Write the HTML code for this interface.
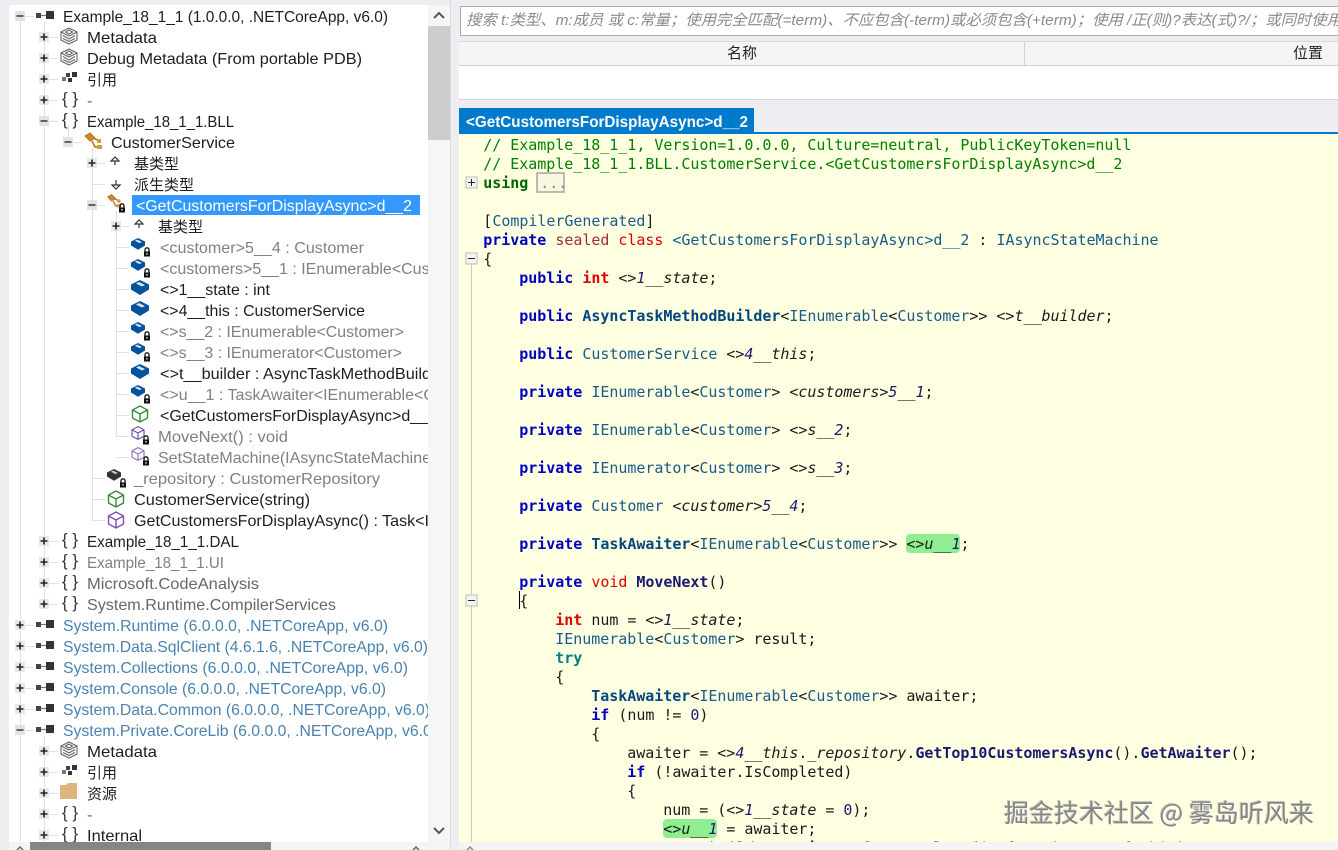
<!DOCTYPE html>
<html lang="zh"><head><meta charset="utf-8"><title>ILSpy</title>
<style>
html,body{margin:0;padding:0;width:1338px;height:850px;overflow:hidden;background:#eeeef2}
svg{position:absolute;left:0;top:0;display:block}
.tr text{font-family:"Liberation Sans","Noto Sans CJK SC",sans-serif;font-size:16px;fill:#1e1e1e}
.tr text.cj{font-size:15px}
.tr text.g{fill:#808080}
.tr text.d{fill:#666}
.tr text.b{fill:#4a82b0}
.tr text.br{font-family:"Liberation Sans",sans-serif;font-size:17px;fill:#333}
.c text{font-family:"DejaVu Sans Mono",monospace;font-size:15px;letter-spacing:-.03px;fill:#1a1a1a;white-space:pre}
.k{fill:#0000c0;font-weight:bold}
.sl{fill:#a03030}
.rd{fill:#e00000}
.ib{fill:#e00000;font-weight:bold}
.t{fill:#1a5a8a}
.tb{fill:#00467f;font-weight:bold}
.m{fill:#191970;font-weight:bold}
.i{font-style:italic}
.n{font-style:italic;fill:#191970}
.us{fill:#006400;font-weight:bold}
.tr2{fill:#008080;font-weight:bold}
.z{fill:#191970}
#wm{position:absolute;left:1004px;top:794px;font:25px/36px "Noto Sans CJK SC",sans-serif;color:#858585;white-space:pre;text-shadow:1px 1px 0 rgba(255,255,255,.9),-1px -1px 0 rgba(90,90,90,.35)}
</style></head><body>
<svg width="1338" height="850" viewBox="0 0 1338 850" xmlns="http://www.w3.org/2000/svg">
<defs>
<clipPath id="treeClip"><rect x="9" y="5" width="419" height="837"/></clipPath>
<clipPath id="edClip"><rect x="459" y="134" width="879" height="708"/></clipPath>
<g id="p"><rect x="-5" y="-5" width="10" height="10" fill="#e8e8e8"/><path d="M-3.5 0H3.5M0-3.5V3.5" stroke="#222" stroke-width="1.6"/></g>
<g id="q"><rect x="-5" y="-5" width="10" height="10" fill="#e2e2e2"/><path d="M-3.5 0H3.5" stroke="#444" stroke-width="1.6"/></g>
<g id="asm"><rect x="-4" y="-2" width="5" height="5" fill="#444"/><path d="M1 .5H6" stroke="#777" stroke-width="1.2"/><rect x="6" y="-4" width="8" height="8" fill="#333"/></g>
<g id="meta" fill="none" stroke="#666" stroke-width="1.1"><path d="M0-8L8-4V4L0 8-8 4V-4Z"/><path d="M-8-4L0 0 8-4"/><path d="M-6-.5L0 3 6-.5"/><path d="M-6 2.5L0 5.500 6 2.5"/><path d="M-3.500-4L0-2 3.500-4 0-6Z"/></g>
<g id="refs"><rect x="-7" y="-1" width="4" height="4" fill="#777"/><rect x="-3" y="-5" width="4" height="4" fill="#444"/><rect x="-1" y="0" width="4" height="4" fill="#333"/><rect x="3" y="-6" width="5" height="5" fill="#333"/></g>
<g id="cls" fill="none"><path d="M-8-5L-3-8 2-3-3 0Z" fill="#c98a2e" stroke="#b7701a"/><path d="M0-3L7 0M-1 0L2 6H8" stroke="#b7701a" stroke-width="1.6"/><rect x="4" y="-2" width="4" height="4" fill="#d69a3c"/><rect x="4" y="4" width="5" height="4" fill="#d69a3c"/></g>
<g id="lock"><path d="M-2 -.5V-2.2A2 2 0 0 1 2-2.2V-.5" fill="none" stroke="#111" stroke-width="1.3"/><rect x="-3" y="-.5" width="6" height="5" fill="#111"/><rect x="-.6" y="1" width="1.2" height="1.6" fill="#fff"/></g>
<g id="fld"><path d="M0-7L9-2.5V2.5L0 8-9 2.5V-2.5Z" fill="#00539c"/><path d="M-1-5L5-2 2-.5-4-3.5Z" fill="#d5e5f3"/></g>
<g id="fldl"><g transform="translate(-2,-3.5) scale(.78)"><use href="#fld"/></g><use href="#lock" x="7" y="5"/></g>
<g id="fldk"><g transform="translate(-2,-3.5) scale(.78)"><path d="M0-7L9-2.5V2.5L0 8-9 2.5V-2.5Z" fill="#333"/><path d="M-1-5L5-2 2-.5-4-3.5Z" fill="#ccc"/></g><use href="#lock" x="7" y="5"/></g>
<path id="cube" d="M0-8L7.5-4V4L0 8-7.5 4V-4ZM-7.5-4L0 0 7.5-4M0 0V8" fill="none" stroke-width="1.4"/>
<g id="up" fill="none" stroke="#333" stroke-width="1.2"><path d="M-4-1L0-5 4-1Z"/><path d="M0-1V3"/></g>
<g id="dn" fill="none" stroke="#333" stroke-width="1.2"><path d="M-4 1L0 5 4 1Z"/><path d="M0-4V1"/></g>
</defs>

<!-- right panels -->
<rect x="9" y="5" width="441" height="845" fill="#fff"/>
<rect x="450" y="0" width="1" height="850" fill="#dcdce0"/>
<rect x="460.500" y="6.500" width="900" height="29" fill="#fff" stroke="#ababab"/>
<text x="466" y="25" font-family="'Liberation Sans','Noto Sans CJK SC',sans-serif" font-size="15" font-style="italic" fill="#8a8a8a" textLength="876" lengthAdjust="spacingAndGlyphs">搜索 t:类型、m:成员 或 c:常量；使用完全匹配(=term)、不应包含(-term)或必须包含(+term)；使用 /正(则)?表达(式)?/；或同时使用</text>
<rect x="459" y="41" width="879" height="59" fill="#fff"/>
<rect x="459" y="41" width="879" height="24" fill="#f5f5f5"/>
<rect x="459" y="41" width="879" height="1" fill="#d8d8d8"/>
<rect x="459" y="65" width="879" height="1" fill="#cfcfcf"/>
<rect x="459" y="99" width="879" height="1" fill="#d4d4d4"/>
<rect x="1024" y="42" width="1" height="23" fill="#cfcfcf"/>
<text x="727" y="58" font-family="'Noto Sans CJK SC',sans-serif" font-size="15" fill="#222">名称</text>
<text x="1293" y="58" font-family="'Noto Sans CJK SC',sans-serif" font-size="15" fill="#222">位置</text>
<rect x="459" y="108" width="295" height="25" fill="#007acc"/>
<rect x="459" y="132" width="879" height="2" fill="#007acc"/>
<text x="466" y="127" font-family="'Liberation Sans',sans-serif" font-size="16" font-weight="bold" fill="#fff" textLength="282" lengthAdjust="spacingAndGlyphs">&lt;GetCustomersForDisplayAsync&gt;d__2</text>

<!-- editor -->
<rect x="459" y="134" width="879" height="708" fill="#ffffe1"/>
<rect x="459" y="842" width="879" height="8" fill="#f4f4f4"/>
<rect x="471" y="264" width="1" height="330" fill="#c8c8c8"/>
<rect x="471" y="606" width="1" height="236" fill="#c8c8c8"/>
<path d="M467 850L470 847 473 850" fill="none" stroke="#888" stroke-width="1.500"/>
<rect x="466" y="177" width="11" height="11" fill="#f5f5ef" stroke="#bbb"/><path d="M468 182.500H475M471.500 179V186" stroke="#222"/>
<rect x="466" y="253" width="11" height="11" fill="#f5f5ef" stroke="#bbb"/><path d="M468 258.500H475" stroke="#222"/>
<rect x="466" y="595" width="11" height="11" fill="#f5f5ef" stroke="#bbb"/><path d="M468 600.500H475" stroke="#222"/>
<rect x="537" y="173" width="27" height="19" fill="#f8f8e0" stroke="#a5a5a5" stroke-width="1.5"/>
<rect x="906" y="534" width="54" height="19" rx="4" fill="#90ee90"/>
<rect x="663" y="819" width="54" height="19" rx="4" fill="#90ee90"/>
<rect x="519" y="591" width="1" height="18" fill="#000"/>
<g clip-path="url(#edClip)"><g class="c" transform="translate(-.7,1)">
<text x="484" y="149" style="fill:#008000">// Example_18_1_1, Version=1.0.0.0, Culture=neutral, PublicKeyToken=null</text>
<text x="484" y="168" style="fill:#008000">// Example_18_1_1.BLL.CustomerService.&lt;GetCustomersForDisplayAsync&gt;d__2</text>
<text x="484" y="187"><tspan class="us">using</tspan></text>
<text x="541" y="187" style="fill:#888">...</text>
<text x="484" y="225">[<tspan class="t">CompilerGenerated</tspan>]</text>
<text x="484" y="244"><tspan class="k">private</tspan> <tspan class="sl">sealed</tspan> <tspan class="rd">class</tspan> <tspan class="t">&lt;GetCustomersForDisplayAsync&gt;d__2</tspan> : <tspan class="t">IAsyncStateMachine</tspan></text>
<text x="484" y="263">{</text>
<text x="520" y="282"><tspan class="k">public</tspan> <tspan class="ib">int</tspan> &lt;&gt;<tspan class="n">1</tspan><tspan class="i">__state</tspan>;</text>
<text x="520" y="320"><tspan class="k">public</tspan> <tspan class="tb">AsyncTaskMethodBuilder</tspan>&lt;<tspan class="t">IEnumerable</tspan>&lt;<tspan class="t">Customer</tspan>&gt;&gt; &lt;&gt;<tspan class="i">t__builder</tspan>;</text>
<text x="520" y="358"><tspan class="k">public</tspan> <tspan class="t">CustomerService</tspan> &lt;&gt;<tspan class="n">4</tspan><tspan class="i">__this</tspan>;</text>
<text x="520" y="396"><tspan class="k">private</tspan> <tspan class="t">IEnumerable</tspan>&lt;<tspan class="t">Customer</tspan>&gt; <tspan class="i">&lt;customers&gt;</tspan><tspan class="n">5</tspan><tspan class="i">__</tspan><tspan class="n">1</tspan>;</text>
<text x="520" y="434"><tspan class="k">private</tspan> <tspan class="t">IEnumerable</tspan>&lt;<tspan class="t">Customer</tspan>&gt; &lt;&gt;<tspan class="i">s__</tspan><tspan class="n">2</tspan>;</text>
<text x="520" y="472"><tspan class="k">private</tspan> <tspan class="t">IEnumerator</tspan>&lt;<tspan class="t">Customer</tspan>&gt; &lt;&gt;<tspan class="i">s__</tspan><tspan class="n">3</tspan>;</text>
<text x="520" y="510"><tspan class="k">private</tspan> <tspan class="t">Customer</tspan> <tspan class="i">&lt;customer&gt;</tspan><tspan class="n">5</tspan><tspan class="i">__</tspan><tspan class="n">4</tspan>;</text>
<text x="520" y="548"><tspan class="k">private</tspan> <tspan class="tb">TaskAwaiter</tspan>&lt;<tspan class="t">IEnumerable</tspan>&lt;<tspan class="t">Customer</tspan>&gt;&gt; &lt;&gt;<tspan class="i">u__</tspan><tspan class="n">1</tspan>;</text>
<text x="520" y="586"><tspan class="k">private</tspan> <tspan class="rd">void</tspan> <tspan class="m">MoveNext</tspan>()</text>
<text x="520" y="605">{</text>
<text x="556" y="624"><tspan class="ib">int</tspan> num = &lt;&gt;<tspan class="n">1</tspan><tspan class="i">__state</tspan>;</text>
<text x="556" y="643"><tspan class="t">IEnumerable</tspan>&lt;<tspan class="t">Customer</tspan>&gt; result;</text>
<text x="556" y="662"><tspan class="tr2">try</tspan></text>
<text x="556" y="681">{</text>
<text x="592" y="700"><tspan class="tb">TaskAwaiter</tspan>&lt;<tspan class="t">IEnumerable</tspan>&lt;<tspan class="t">Customer</tspan>&gt;&gt; awaiter;</text>
<text x="592" y="719"><tspan class="k">if</tspan> (num != <tspan class="z">0</tspan>)</text>
<text x="592" y="738">{</text>
<text x="628" y="757">awaiter = &lt;&gt;<tspan class="n">4</tspan><tspan class="i">__this</tspan>.<tspan class="i">_repository</tspan>.<tspan class="m">GetTop10CustomersAsync</tspan>().<tspan class="m">GetAwaiter</tspan>();</text>
<text x="628" y="776"><tspan class="k">if</tspan> (!awaiter.IsCompleted)</text>
<text x="628" y="795">{</text>
<text x="664" y="814">num = (&lt;&gt;<tspan class="n">1</tspan><tspan class="i">__state</tspan> = <tspan class="z">0</tspan>);</text>
<text x="664" y="833">&lt;&gt;<tspan class="i">u__</tspan><tspan class="n">1</tspan> = awaiter;</text>
<text x="664" y="852">&lt;&gt;<tspan class="i">t__builder</tspan>.<tspan class="m">AwaitUnsafeOnCompleted</tspan>(ref awaiter, ref this);</text>
</g></g>

<!-- tree scrollbars -->
<rect x="428" y="5" width="22" height="837" fill="#f6f6f6"/>
<rect x="428" y="26" width="22" height="114" fill="#cdcdcd"/>
<path d="M434 18L439 13 444 18" fill="none" stroke="#555" stroke-width="2"/>
<path d="M434 828L439 833 444 828" fill="none" stroke="#555" stroke-width="2"/>
<rect x="9" y="842" width="441" height="8" fill="#f4f4f4"/>
<rect x="30" y="842" width="241" height="8" fill="#858585"/>
<path d="M17 850L20 847 23 850" fill="none" stroke="#666" stroke-width="1.500"/>
<path d="M413 850L416 847 419 850" fill="none" stroke="#666" stroke-width="1.500"/>
<rect x="0" y="0" width="9" height="850" fill="#eeeef2"/>

<!-- tree -->
<g class="tr" clip-path="url(#treeClip)">
<g fill="#e0e0e0">
<rect x="20" y="10" width="1" height="832"/>
<rect x="44" y="22" width="1" height="582"/>
<rect x="44" y="736" width="1" height="106"/>
<rect x="68" y="126" width="1" height="16"/>
<rect x="92" y="148" width="1" height="372"/>
<rect x="116" y="211" width="1" height="226"/>
<rect x="92" y="500" width="1" height="20"/>
<rect x="25" y="16" width="9" height="1"/><rect x="49" y="37" width="9" height="1"/><rect x="49" y="58" width="9" height="1"/><rect x="49" y="79" width="9" height="1"/><rect x="49" y="100" width="9" height="1"/><rect x="49" y="121" width="9" height="1"/>
<rect x="73" y="142" width="9" height="1"/><rect x="97" y="163" width="8" height="1"/><rect x="92" y="184" width="13" height="1"/><rect x="97" y="205" width="8" height="1"/><rect x="121" y="226" width="8" height="1"/>
<rect x="116" y="247" width="13" height="1"/><rect x="116" y="268" width="13" height="1"/><rect x="116" y="289" width="13" height="1"/><rect x="116" y="310" width="13" height="1"/><rect x="116" y="331" width="13" height="1"/><rect x="116" y="352" width="13" height="1"/><rect x="116" y="373" width="13" height="1"/><rect x="116" y="394" width="13" height="1"/><rect x="116" y="415" width="13" height="1"/><rect x="116" y="436" width="13" height="1"/><rect x="116" y="457" width="13" height="1"/>
<rect x="92" y="478" width="13" height="1"/><rect x="92" y="499" width="13" height="1"/><rect x="92" y="520" width="13" height="1"/>
<rect x="49" y="541" width="9" height="1"/><rect x="49" y="562" width="9" height="1"/><rect x="49" y="583" width="9" height="1"/><rect x="49" y="604" width="9" height="1"/>
<rect x="25" y="625" width="9" height="1"/><rect x="25" y="646" width="9" height="1"/><rect x="25" y="667" width="9" height="1"/><rect x="25" y="688" width="9" height="1"/><rect x="25" y="709" width="9" height="1"/><rect x="25" y="730" width="9" height="1"/>
<rect x="49" y="751" width="9" height="1"/><rect x="49" y="772" width="9" height="1"/><rect x="49" y="793" width="9" height="1"/><rect x="49" y="814" width="9" height="1"/><rect x="49" y="835" width="9" height="1"/>
</g>
<rect x="132" y="195" width="288" height="20" fill="#3399ff"/>

<use href="#q" x="20" y="16"/><use href="#asm" x="40" y="15"/>
<text x="63" y="22" textLength="325" lengthAdjust="spacingAndGlyphs">Example_18_1_1 (1.0.0.0, .NETCoreApp, v6.0)</text>
<use href="#p" x="44" y="37"/><use href="#meta" x="69" y="36"/>
<text x="87" y="43" textLength="70" lengthAdjust="spacingAndGlyphs">Metadata</text>
<use href="#p" x="44" y="58"/><use href="#meta" x="69" y="57"/>
<text x="87" y="64" textLength="275" lengthAdjust="spacingAndGlyphs">Debug Metadata (From portable PDB)</text>
<use href="#p" x="44" y="79"/><use href="#refs" x="69" y="78"/>
<text class="cj" x="87" y="85" textLength="30" lengthAdjust="spacingAndGlyphs">引用</text>
<use href="#p" x="44" y="100"/><text class="br" x="62" y="104">{ }</text>
<text x="87" y="106" class="d">-</text>
<use href="#q" x="44" y="121"/><text class="br" x="62" y="125">{ }</text>
<text x="87" y="127" textLength="147" lengthAdjust="spacingAndGlyphs">Example_18_1_1.BLL</text>
<use href="#q" x="68" y="142"/><use href="#cls" x="93" y="141"/>
<text x="111" y="148" textLength="124" lengthAdjust="spacingAndGlyphs">CustomerService</text>
<use href="#p" x="92" y="163"/><use href="#up" x="115" y="162"/>
<text class="cj" x="134" y="169" textLength="45" lengthAdjust="spacingAndGlyphs">基类型</text>
<use href="#dn" x="116" y="184"/>
<text class="cj" x="134" y="190" textLength="60" lengthAdjust="spacingAndGlyphs">派生类型</text>
<use href="#q" x="92" y="205"/><g transform="translate(114,201) scale(.8)"><use href="#cls"/></g><use href="#lock" x="122" y="208"/>
<text x="136" y="211" textLength="276" lengthAdjust="spacingAndGlyphs" style="fill:#fff">&lt;GetCustomersForDisplayAsync&gt;d__2</text>
<use href="#p" x="116" y="226"/><use href="#up" x="139" y="225"/>
<text class="cj" x="158" y="232" textLength="45" lengthAdjust="spacingAndGlyphs">基类型</text>
<use href="#fldl" x="140" y="247"/>
<text class="g" x="160" y="253" textLength="204" lengthAdjust="spacingAndGlyphs">&lt;customer&gt;5__4 : Customer</text>
<use href="#fldl" x="140" y="268"/>
<text class="g" x="160" y="274" textLength="274" lengthAdjust="spacingAndGlyphs">&lt;customers&gt;5__1 : IEnumerable&lt;Cust</text>
<use href="#fld" x="140" y="287"/>
<text x="160" y="295" textLength="110" lengthAdjust="spacingAndGlyphs">&lt;&gt;1__state : int</text>
<use href="#fld" x="140" y="308"/>
<text x="160" y="316" textLength="205" lengthAdjust="spacingAndGlyphs">&lt;&gt;4__this : CustomerService</text>
<use href="#fldl" x="140" y="331"/>
<text class="g" x="160" y="337" textLength="244" lengthAdjust="spacingAndGlyphs">&lt;&gt;s__2 : IEnumerable&lt;Customer&gt;</text>
<use href="#fldl" x="140" y="352"/>
<text class="g" x="160" y="358" textLength="242" lengthAdjust="spacingAndGlyphs">&lt;&gt;s__3 : IEnumerator&lt;Customer&gt;</text>
<use href="#fld" x="140" y="371"/>
<text x="160" y="379" textLength="271" lengthAdjust="spacingAndGlyphs">&lt;&gt;t__builder : AsyncTaskMethodBuild</text>
<use href="#fldl" x="140" y="394"/>
<text class="g" x="160" y="400" textLength="275" lengthAdjust="spacingAndGlyphs">&lt;&gt;u__1 : TaskAwaiter&lt;IEnumerable&lt;C</text>
<use href="#cube" x="140" y="414" stroke="#388a34"/>
<text x="160" y="421" textLength="268" lengthAdjust="spacingAndGlyphs">&lt;GetCustomersForDisplayAsync&gt;d__</text>
<g transform="translate(138,433) scale(.8)"><use href="#cube" stroke="#6a4fa8"/></g><use href="#lock" x="146" y="440"/>
<text class="g" x="158" y="442" textLength="130" lengthAdjust="spacingAndGlyphs">MoveNext() : void</text>
<g transform="translate(138,454) scale(.8)"><use href="#cube" stroke="#8c70c0"/></g><use href="#lock" x="146" y="461"/>
<text class="g" x="158" y="463" textLength="273" lengthAdjust="spacingAndGlyphs">SetStateMachine(IAsyncStateMachine</text>
<use href="#fldk" x="116" y="478"/>
<text class="g" x="134" y="484" textLength="246" lengthAdjust="spacingAndGlyphs">_repository : CustomerRepository</text>
<use href="#cube" x="116" y="499" stroke="#388a34"/>
<text x="134" y="505" textLength="176" lengthAdjust="spacingAndGlyphs">CustomerService(string)</text>
<use href="#cube" x="116" y="520" stroke="#7d4fb5"/>
<text x="134" y="526" textLength="295" lengthAdjust="spacingAndGlyphs">GetCustomersForDisplayAsync() : Task&lt;I</text>
<use href="#p" x="44" y="541"/><text class="br" x="62" y="545">{ }</text>
<text x="87" y="547" textLength="152" lengthAdjust="spacingAndGlyphs">Example_18_1_1.DAL</text>
<use href="#p" x="44" y="562"/><text class="br" x="62" y="566">{ }</text>
<text class="g" x="87" y="568" textLength="137" lengthAdjust="spacingAndGlyphs">Example_18_1_1.UI</text>
<use href="#p" x="44" y="583"/><text class="br" x="62" y="587">{ }</text>
<text class="d" x="87" y="589" textLength="172" lengthAdjust="spacingAndGlyphs">Microsoft.CodeAnalysis</text>
<use href="#p" x="44" y="604"/><text class="br" x="62" y="608">{ }</text>
<text class="d" x="87" y="610" textLength="249" lengthAdjust="spacingAndGlyphs">System.Runtime.CompilerServices</text>
<use href="#p" x="20" y="625"/><use href="#asm" x="40" y="624"/>
<text class="b" x="63" y="631" textLength="325" lengthAdjust="spacingAndGlyphs">System.Runtime (6.0.0.0, .NETCoreApp, v6.0)</text>
<use href="#p" x="20" y="646"/><use href="#asm" x="40" y="645"/>
<text class="b" x="63" y="652" textLength="365" lengthAdjust="spacingAndGlyphs">System.Data.SqlClient (4.6.1.6, .NETCoreApp, v6.0)</text>
<use href="#p" x="20" y="667"/><use href="#asm" x="40" y="666"/>
<text class="b" x="63" y="673" textLength="345" lengthAdjust="spacingAndGlyphs">System.Collections (6.0.0.0, .NETCoreApp, v6.0)</text>
<use href="#p" x="20" y="688"/><use href="#asm" x="40" y="687"/>
<text class="b" x="63" y="694" textLength="323" lengthAdjust="spacingAndGlyphs">System.Console (6.0.0.0, .NETCoreApp, v6.0)</text>
<use href="#p" x="20" y="709"/><use href="#asm" x="40" y="708"/>
<text class="b" x="63" y="715" textLength="367" lengthAdjust="spacingAndGlyphs">System.Data.Common (6.0.0.0, .NETCoreApp, v6.0)</text>
<use href="#q" x="20" y="730"/><use href="#asm" x="40" y="729"/>
<text class="b" x="63" y="736" textLength="374" lengthAdjust="spacingAndGlyphs">System.Private.CoreLib (6.0.0.0, .NETCoreApp, v6.0)</text>
<use href="#p" x="44" y="751"/><use href="#meta" x="69" y="750"/>
<text x="87" y="757" textLength="70" lengthAdjust="spacingAndGlyphs">Metadata</text>
<use href="#p" x="44" y="772"/><use href="#refs" x="69" y="771"/>
<text class="cj" x="87" y="778" textLength="30" lengthAdjust="spacingAndGlyphs">引用</text>
<use href="#p" x="44" y="793"/><path d="M60 785H66L68 783H77V799H60Z" fill="#dcb67a"/>
<text class="cj" x="87" y="799" textLength="30" lengthAdjust="spacingAndGlyphs">资源</text>
<use href="#p" x="44" y="814"/><text class="br" x="62" y="818">{ }</text>
<text x="87" y="820" class="d">-</text>
<use href="#p" x="44" y="835"/><text class="br" x="62" y="839">{ }</text>
<text x="87" y="841" textLength="55" lengthAdjust="spacingAndGlyphs">Internal</text>
</g>
</svg>
<div id="wm">掘金技术社区 @ 雾岛听风来</div>
</body></html>
